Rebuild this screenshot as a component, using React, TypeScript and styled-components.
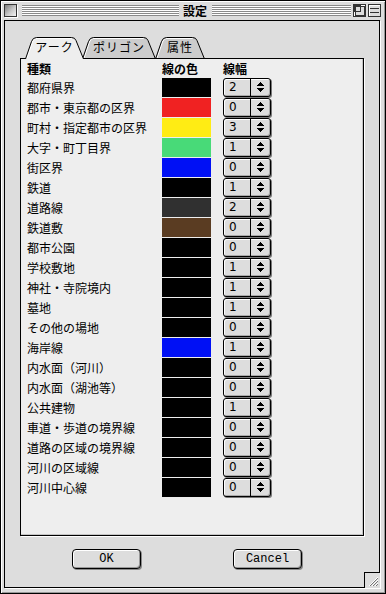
import React, { FC } from "react";
import styled, { createGlobalStyle } from "styled-components";

const GlobalStyle = createGlobalStyle`
  html, body {
    margin: 0;
    padding: 0;
    background: #ffffff;
  }
  body {
    font-family: "Noto Sans CJK JP", "Liberation Sans", sans-serif;
    font-size: 12px;
    color: #000;
  }
`;

type Row = { name: string; color: string; width: number };

const rows: Row[] = [
  { name: "都府県界", color: "#000000", width: 2 },
  { name: "郡市・東京都の区界", color: "#f02222", width: 0 },
  { name: "町村・指定都市の区界", color: "#ffec14", width: 3 },
  { name: "大字・町丁目界", color: "#48da78", width: 1 },
  { name: "街区界", color: "#0010f5", width: 0 },
  { name: "鉄道", color: "#000000", width: 1 },
  { name: "道路線", color: "#303030", width: 2 },
  { name: "鉄道敷", color: "#5a3c22", width: 0 },
  { name: "都市公園", color: "#000000", width: 0 },
  { name: "学校敷地", color: "#000000", width: 1 },
  { name: "神社・寺院境内", color: "#000000", width: 1 },
  { name: "墓地", color: "#000000", width: 1 },
  { name: "その他の場地", color: "#000000", width: 0 },
  { name: "海岸線", color: "#0010f5", width: 1 },
  { name: "内水面（河川）", color: "#000000", width: 0 },
  { name: "内水面（湖池等）", color: "#000000", width: 0 },
  { name: "公共建物", color: "#000000", width: 1 },
  { name: "車道・歩道の境界線", color: "#000000", width: 0 },
  { name: "道路の区域の境界線", color: "#000000", width: 0 },
  { name: "河川の区域線", color: "#000000", width: 0 },
  { name: "河川中心線", color: "#000000", width: 0 },
];

const tabs = [
  { label: "アーク", width: 59, offset: 0 },
  { label: "ポリゴン", width: 74, offset: -2 },
  { label: "属性", width: 50, offset: -1 },
];

const Window = styled.div`
  position: relative;
  width: 386px;
  height: 594px;
  box-sizing: border-box;
  border: 1px solid #000;
  background: #dddddd;
  box-shadow: inset 1px 1px 0 #ffffff, inset -1px -1px 0 #999999;
  display: flex;
  flex-direction: column;
`;

const TitleBar = styled.div`
  height: 19px;
  display: flex;
  align-items: center;
  padding: 0 4px 0 3px;
  flex-shrink: 0;
`;

const CloseBox = styled.div`
  width: 13px;
  height: 13px;
  box-sizing: border-box;
  border: 1px solid #333;
  background: linear-gradient(135deg, #7a7a7a 0%, #c8c8c8 55%, #f4f4f4 100%);
  box-shadow: 1px 1px 0 #ffffff;
`;

const Stripes = styled.div<{ $width?: number }>`
  height: 11px;
  margin: 0 0 0 5px;
  ${({ $width }) => ($width ? `width: ${$width}px;` : "flex: 1;")}
  background: repeating-linear-gradient(
    to bottom,
    #8a8a8a 0px,
    #8a8a8a 1px,
    #ffffff 1px,
    #ffffff 2px
  );
`;

const Title = styled.div`
  font-weight: bold;
  font-size: 12px;
  line-height: 19px;
  padding: 0 0 0 4px;
`;

const TitleButton = styled.div`
  width: 13px;
  height: 13px;
  margin-left: 2px;
  &:first-of-type {
    margin-left: 3px;
  }
  svg {
    display: block;
  }
`;

const Body = styled.div`
  flex: 1;
  display: flex;
  padding: 0 5px 5px 3px;
`;

const Content = styled.div`
  flex: 1;
  border: 1px solid #000;
  background: #dddddd;
  box-shadow: 1px 1px 0 #ffffff;
  display: flex;
  flex-direction: column;
  padding: 16px 15px 0 15px;
`;

const TabRow = styled.div`
  position: relative;
  z-index: 1;
  display: flex;
  height: 22px;
  margin-bottom: -1px;
  padding-left: 5px;
`;

const Tab = styled.div<{ $width: number; $offset: number; $active: boolean }>`
  position: relative;
  width: ${({ $width }) => $width}px;
  height: 22px;
  margin-left: ${({ $offset }) => $offset}px;
  z-index: ${({ $active }) => ($active ? 2 : 1)};
  display: flex;
  align-items: center;
  justify-content: center;
  padding-bottom: 2px;
  box-sizing: border-box;
  svg {
    position: absolute;
    left: 0;
    top: 0;
  }
`;

const TabLabel = styled.span`
  position: relative;
  font-size: 12px;
  line-height: 14px;
  letter-spacing: 1px;
`;

const Panel = styled.div`
  height: 478px;
  box-sizing: border-box;
  border: 1px solid #000;
  background: #eeeeee;
  box-shadow: inset -1px -1px 0 #c4c4c4, 1px 1px 0 #ffffff;
  padding: 0 0 0 6px;
`;

const Grid = styled.div`
  display: grid;
  grid-template-columns: 135px 61px 60px;
  grid-template-rows: 19px;
  grid-auto-rows: 20px;
`;

const HeaderCell = styled.div`
  font-weight: bold;
  font-size: 12px;
  height: 19px;
  line-height: 19px;
`;

const HeaderRow = styled.div`
  display: contents;
`;

const NameCell = styled.div`
  font-size: 12px;
  line-height: 19px;
  white-space: nowrap;
`;

const Swatch = styled.div<{ $color: string }>`
  width: 49px;
  height: 19px;
  background: ${({ $color }) => $color};
`;

const Stepper = styled.div`
  width: 48px;
  height: 19px;
  box-sizing: border-box;
  border: 1px solid #000;
  border-radius: 3px;
  background: #dddddd;
  box-shadow: inset 1px 1px 0 #ffffff, inset -1px -1px 0 #aaaaaa,
    1px 1px 0 #777777;
  display: flex;
`;

const StepperValue = styled.div`
  width: 27px;
  box-sizing: border-box;
  padding-left: 5px;
  border-right: 1px solid #000;
  font-family: "DejaVu Sans", "Noto Sans CJK JP", sans-serif;
  font-size: 12px;
  line-height: 17px;
`;

const StepperArrows = styled.div`
  flex: 1;
  display: flex;
  align-items: center;
  justify-content: center;
  svg {
    display: block;
  }
`;

const ButtonRow = styled.div`
  display: flex;
  gap: 92px;
  margin-top: 13px;
  padding-left: 52px;
`;

const Button = styled.div`
  width: 69px;
  height: 20px;
  box-sizing: border-box;
  border: 1px solid #000;
  border-radius: 4px;
  background: #dddddd;
  box-shadow: inset 1px 1px 0 #ffffff, inset -1px -1px 0 #999999,
    1px 1px 0 #888888;
  display: flex;
  align-items: center;
  justify-content: center;
  font-family: "Liberation Mono", "DejaVu Sans Mono", monospace;
  font-size: 12px;
`;

const GrowBox = styled.div`
  position: absolute;
  right: 5px;
  bottom: 5px;
  width: 16px;
  height: 16px;
  box-sizing: border-box;
  border-left: 1px solid #000;
  border-top: 1px solid #000;
  background: #dddddd;
  svg {
    display: block;
  }
`;

const tabPath = (w: number) =>
  `M0.5,22 L6.5,4.5 Q7.8,0.5 11.5,0.5 L${w - 12.5},0.5 Q${w - 9},0.5 ${
    w - 8
  },3.5 L${w - 0.5},22`;

const TabShape: FC<{ width: number; active: boolean }> = ({ width, active }) => (
  <svg width={width} height={22} viewBox={`0 0 ${width} 22`}>
    <path
      d={`${tabPath(width)} Z`}
      fill={active ? "#eeeeee" : "#cccccc"}
      stroke="none"
    />
    <path
      d={`M2,21 L7.6,4.8 Q8.8,1.5 11.5,1.5 L${width - 12.5},1.5`}
      fill="none"
      stroke="#ffffff"
      strokeWidth={1}
    />
    <path d={tabPath(width)} fill="none" stroke="#000" strokeWidth={1} />
    {!active && (
      <line x1={0} y1={21.5} x2={width} y2={21.5} stroke="#000" strokeWidth={1} />
    )}
  </svg>
);

const UpDownArrows: FC = () => (
  <svg width={7} height={11} viewBox="0 0 7 11" shapeRendering="crispEdges">
    <rect x={3} y={0} width={1} height={1} fill="#000" />
    <rect x={2} y={1} width={3} height={1} fill="#000" />
    <rect x={1} y={2} width={5} height={1} fill="#000" />
    <rect x={0} y={3} width={7} height={1} fill="#000" />
    <rect x={0} y={6} width={7} height={1} fill="#000" />
    <rect x={1} y={7} width={5} height={1} fill="#000" />
    <rect x={2} y={8} width={3} height={1} fill="#000" />
    <rect x={3} y={9} width={1} height={1} fill="#000" />
  </svg>
);

const ZoomIcon: FC = () => (
  <svg width={13} height={13} viewBox="0 0 13 13" shapeRendering="crispEdges">
    <rect x={0.5} y={0.5} width={12} height={12} fill="#dddddd" stroke="#333" />
    <rect x={1} y={1} width={11} height={1} fill="#fff" />
    <rect x={1} y={1} width={1} height={11} fill="#fff" />
    <rect x={1.5} y={1.5} width={6} height={6} fill="none" stroke="#333" />
    <rect x={2.5} y={2.5} width={9} height={9} fill="none" stroke="#333" />
  </svg>
);

const CollapseIcon: FC = () => (
  <svg width={13} height={13} viewBox="0 0 13 13" shapeRendering="crispEdges">
    <rect x={0.5} y={0.5} width={12} height={12} fill="#dddddd" stroke="#333" />
    <rect x={1} y={1} width={11} height={1} fill="#fff" />
    <rect x={1} y={1} width={1} height={11} fill="#fff" />
    <rect x={2} y={4} width={9} height={1} fill="#333" />
    <rect x={2} y={8} width={9} height={1} fill="#333" />
  </svg>
);

const GrowIcon: FC = () => (
  <svg width={15} height={15} viewBox="0 0 15 15">
    {[0, 3, 6].map((d) => (
      <g key={d}>
        <line x1={4 + d} y1={13} x2={13} y2={4 + d} stroke="#ffffff" strokeWidth={1} />
        <line x1={5 + d} y1={13} x2={13} y2={5 + d} stroke="#777777" strokeWidth={1} />
      </g>
    ))}
  </svg>
);

const App: FC = () => {
  return (
    <>
      <GlobalStyle />
      <Window>
        <TitleBar>
          <CloseBox />
          <Stripes $width={157} />
          <Title>設定</Title>
          <Stripes />
          <TitleButton>
            <ZoomIcon />
          </TitleButton>
          <TitleButton>
            <CollapseIcon />
          </TitleButton>
        </TitleBar>

        <Body>
          <Content>
            <TabRow>
              {tabs.map((tab, i) => (
                <Tab
                  key={tab.label}
                  $width={tab.width}
                  $offset={tab.offset}
                  $active={i === 0}
                >
                  <TabShape width={tab.width} active={i === 0} />
                  <TabLabel>{tab.label}</TabLabel>
                </Tab>
              ))}
            </TabRow>

            <Panel>
              <Grid>
                <HeaderRow>
                  <HeaderCell>種類</HeaderCell>
                  <HeaderCell>線の色</HeaderCell>
                  <HeaderCell>線幅</HeaderCell>
                </HeaderRow>
                {rows.map((row) => (
                  <React.Fragment key={row.name}>
                    <NameCell>{row.name}</NameCell>
                    <Swatch $color={row.color} />
                    <Stepper>
                      <StepperValue>{row.width}</StepperValue>
                      <StepperArrows>
                        <UpDownArrows />
                      </StepperArrows>
                    </Stepper>
                  </React.Fragment>
                ))}
              </Grid>
            </Panel>

            <ButtonRow>
              <Button>OK</Button>
              <Button>Cancel</Button>
            </ButtonRow>
          </Content>
        </Body>

        <GrowBox>
          <GrowIcon />
        </GrowBox>
      </Window>
    </>
  );
};

export default App;
